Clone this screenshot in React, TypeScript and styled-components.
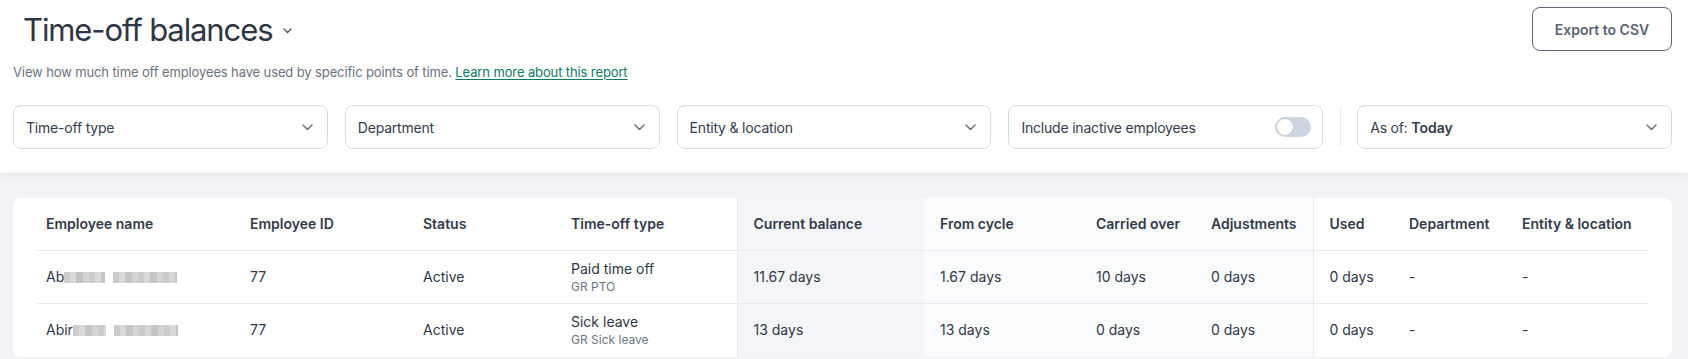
import styled, { createGlobalStyle } from "styled-components";

const GlobalStyle = createGlobalStyle`
  body {
    margin: 0;
    background: #f2f3f6;
    font-family: Inter, "Noto Sans", sans-serif;
    color: #2f3847;
  }
`;

type Zone = "balance" | "cycle" | "plain";

const columns: { label: string; width: number; zone: Zone; divider?: boolean }[] = [
  { label: "Employee name", width: 197, zone: "plain" },
  { label: "Employee ID", width: 173, zone: "plain" },
  { label: "Status", width: 148, zone: "plain" },
  { label: "Time-off type", width: 182, zone: "plain" },
  { label: "Current balance", width: 187, zone: "balance", divider: true },
  { label: "From cycle", width: 156, zone: "cycle" },
  { label: "Carried over", width: 115, zone: "cycle" },
  { label: "Adjustments", width: 118, zone: "cycle" },
  { label: "Used", width: 80, zone: "plain", divider: true },
  { label: "Department", width: 113, zone: "plain" },
  { label: "Entity & location", width: 142, zone: "plain" },
];

const rows = [
  {
    prefix: "Ab",
    blur: [41, 64],
    id: "77",
    status: "Active",
    type: "Paid time off",
    policy: "GR PTO",
    values: ["11.67 days", "1.67 days", "10 days", "0 days", "0 days", "-", "-"],
  },
  {
    prefix: "Abir",
    blur: [33, 64],
    id: "77",
    status: "Active",
    type: "Sick leave",
    policy: "GR Sick leave",
    values: ["13 days", "13 days", "0 days", "0 days", "0 days", "-", "-"],
  },
];

const Header = styled.header`
  background: #ffffff;
  height: 173px;
  box-sizing: border-box;
  padding: 0 16px 0 13px;
  box-shadow: 0 2px 6px rgba(30, 40, 60, 0.07);
  position: relative;
`;

const TopRow = styled.div`
  display: flex;
  justify-content: space-between;
  align-items: flex-start;
`;

const TitleWrap = styled.div`
  display: flex;
  align-items: center;
  gap: 11px;
  padding: 10px 0 0 10px;
`;

const Title = styled.h1`
  margin: 0;
  font-size: 31px;
  line-height: 40px;
  font-weight: 400;
  color: #2d3644;
  letter-spacing: -1.1px;
`;

const TitleChevron = styled.svg`
  width: 9px;
  height: 6px;
  margin-top: 1px;
`;

const ExportButton = styled.button`
  margin-top: 7px;
  width: 140px;
  height: 44px;
  border: 1px solid #5e6879;
  border-radius: 8px;
  background: #ffffff;
  color: #5a6475;
  font-family: Inter, sans-serif;
  font-size: 14px;
  font-weight: 600;
`;

const Subtitle = styled.p`
  margin: 12px 0 0;
  font-size: 13px;
  line-height: 18px;
  color: #6b7280;
  letter-spacing: -0.12px;
`;

const LearnLink = styled.a`
  color: #0d7a67;
  text-decoration: underline;
  text-underline-offset: 2px;
`;

const FilterRow = styled.div`
  display: flex;
  align-items: center;
  gap: 17px;
  margin-top: 24px;
`;

const FilterBox = styled.div`
  flex: 1;
  height: 44px;
  box-sizing: border-box;
  border: 1px solid #d6dce6;
  border-radius: 8px;
  display: flex;
  align-items: center;
  justify-content: space-between;
  padding: 0 14px 0 12px;
  font-size: 14px;
  color: #343d4c;
  letter-spacing: -0.2px;
`;

const Chevron = styled.svg`
  width: 11px;
  height: 7px;
`;

const Separator = styled.div`
  width: 1px;
  height: 38px;
  margin-right: -1px;
  background: #e4e7ec;
`;

const Toggle = styled.span`
  width: 36px;
  height: 20px;
  border-radius: 10px;
  background: #cdd5e1;
  display: flex;
  align-items: center;
  padding: 2px;
  box-sizing: border-box;
  margin-right: -3px;
`;

const Knob = styled.span`
  width: 16px;
  height: 16px;
  border-radius: 50%;
  background: #ffffff;
  box-shadow: 0 0 0 0.5px #b8c1cf;
`;

const Strong = styled.b`
  font-weight: 600;
  letter-spacing: 0;
`;

const Main = styled.main`
  padding: 25px 16px 0 13px;
`;

const Card = styled.section`
  background: #ffffff;
  border-radius: 8px;
  padding: 0 24px;
`;

const Table = styled.table`
  width: 1611px;
  table-layout: fixed;
  border-collapse: collapse;
`;

const Col = styled.col<{ $w: number }>`
  width: ${(p) => p.$w}px;
`;

const zoneBg: Record<Zone, string> = {
  balance: "#f3f5f8",
  cycle: "#fafbfc",
  plain: "transparent",
};

const Cell = styled.td<{ $zone: Zone; $divider?: boolean; $first?: boolean }>`
  background: ${(p) => zoneBg[p.$zone]};
  border-left: ${(p) => (p.$divider ? "1px solid #e6e9ee" : "none")};
  padding: 0 8px 0 ${(p) => (p.$first ? 9 : 16)}px;
  font-size: 14px;
  line-height: 20px;
  color: #2f3847;
  text-align: left;
  white-space: nowrap;
`;

const HeadCell = styled(Cell).attrs({ as: "th" })`
  height: 52px;
  font-weight: 600;
  color: #323b4a;
`;

const BodyRow = styled.tr`
  height: 53px;
  border-top: 1px solid #e6e9ef;
`;

const Sub = styled.div`
  font-size: 12px;
  line-height: 16px;
  color: #6b7685;
`;

const NameWrap = styled.span`
  display: inline-flex;
  align-items: center;
`;

const Redacted = styled.span<{ $w: number; $gap?: number }>`
  display: inline-block;
  width: ${(p) => p.$w}px;
  height: 11px;
  margin-left: ${(p) => p.$gap ?? 0}px;
  background: repeating-linear-gradient(
    90deg,
    #c4c4c4 0 6px,
    #d3d3d3 6px 12px,
    #bcbcbc 12px 19px,
    #cdcdcd 19px 25px
  );
  filter: blur(0.6px);
  opacity: 0.85;
`;

const ChevronDown = () => (
  <Chevron viewBox="0 0 11 7" fill="none">
    <path d="M1 1l4.5 4.5L10 1" stroke="#6b7280" strokeWidth="1.5" strokeLinecap="round" strokeLinejoin="round" />
  </Chevron>
);

export default function App() {
  return (
    <>
      <GlobalStyle />
      <Header>
        <TopRow>
          <TitleWrap>
            <Title>Time-off balances</Title>
            <TitleChevron viewBox="0 0 9 6" fill="none">
              <path d="M1 1l3.5 3.5L8 1" stroke="#4b5563" strokeWidth="1.3" strokeLinecap="round" />
            </TitleChevron>
          </TitleWrap>
          <ExportButton>Export to CSV</ExportButton>
        </TopRow>
        <Subtitle>
          View how much time off employees have used by specific points of time.{" "}
          <LearnLink href="#">Learn more about this report</LearnLink>
        </Subtitle>
        <FilterRow>
          <FilterBox>
            Time-off type
            <ChevronDown />
          </FilterBox>
          <FilterBox>
            Department
            <ChevronDown />
          </FilterBox>
          <FilterBox>
            Entity &amp; location
            <ChevronDown />
          </FilterBox>
          <FilterBox>
            Include inactive employees
            <Toggle>
              <Knob />
            </Toggle>
          </FilterBox>
          <Separator />
          <FilterBox>
            <span>
              As of: <Strong>Today</Strong>
            </span>
            <ChevronDown />
          </FilterBox>
        </FilterRow>
      </Header>
      <Main>
        <Card>
          <Table>
            <colgroup>
              {columns.map((c) => (
                <Col key={c.label} $w={c.width} />
              ))}
            </colgroup>
            <thead>
              <tr>
                {columns.map((c, i) => (
                  <HeadCell key={c.label} $zone={c.zone} $divider={c.divider} $first={i === 0}>
                    {c.label}
                  </HeadCell>
                ))}
              </tr>
            </thead>
            <tbody>
              {rows.map((r, ri) => (
                <BodyRow key={ri}>
                  <Cell $zone="plain" $first>
                    <NameWrap>
                      {r.prefix}
                      <Redacted $w={r.blur[0]} />
                      <Redacted $w={r.blur[1]} $gap={8} />
                    </NameWrap>
                  </Cell>
                  <Cell $zone="plain">{r.id}</Cell>
                  <Cell $zone="plain">{r.status}</Cell>
                  <Cell $zone="plain">
                    {r.type}
                    <Sub>{r.policy}</Sub>
                  </Cell>
                  {r.values.map((v, vi) => {
                    const c = columns[vi + 4];
                    return (
                      <Cell key={vi} $zone={c.zone} $divider={c.divider}>
                        {v}
                      </Cell>
                    );
                  })}
                </BodyRow>
              ))}
            </tbody>
          </Table>
        </Card>
      </Main>
    </>
  );
}
